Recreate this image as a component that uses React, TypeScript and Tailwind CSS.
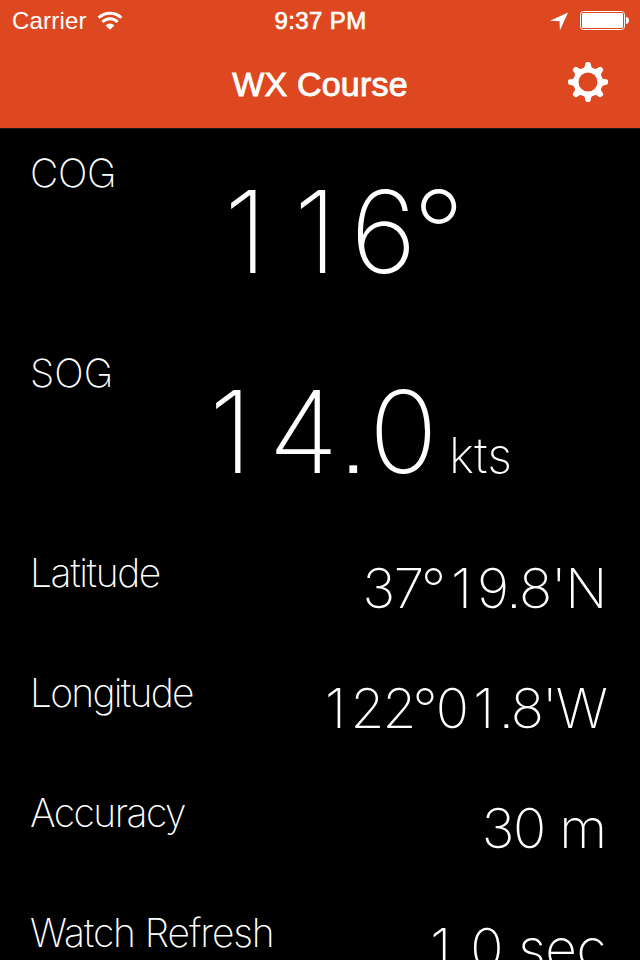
import clsx from "clsx";

type Reading = {
  label: string;
  value: string;
  labelClass?: string;
  valueClass?: string;
};

const readings: Reading[] = [
  {
    label: "Latitude",
    value: "37°19.8'N",
    labelClass: "tracking-[-1.4px]",
    valueClass: "tracking-[-1.3px]",
  },
  {
    label: "Longitude",
    value: "122°01.8'W",
    labelClass: "tracking-[-1.75px]",
    valueClass: "tracking-[-1.9px]",
  },
  {
    label: "Accuracy",
    value: "30 m",
    labelClass: "tracking-[-1.5px]",
    valueClass: "tracking-[-1.2px]",
  },
  {
    label: "Watch Refresh",
    value: "1.0 sec",
    labelClass: "tracking-[-1.1px]",
    valueClass: "tracking-[-0.5px]",
  },
];

const WifiIcon = () => (
  <svg width="26" height="20" viewBox="0 0 26 20" fill="none">
    <path
      d="M1.6 6.8a16.3 16.3 0 0 1 22.8 0M5.4 11a10.8 10.8 0 0 1 15.2 0"
      stroke="white"
      strokeWidth="3"
    />
    <path d="M13 18.8l-4.4-4.4a6.2 6.2 0 0 1 8.8 0z" fill="white" />
  </svg>
);

const LocationIcon = () => (
  <svg width="18" height="19" viewBox="0 0 18 19" fill="white">
    <path d="M0 8.8L18 0.5L9.9 18.5L9.6 9.2z" />
  </svg>
);

const BatteryIcon = () => (
  <svg width="49" height="20" viewBox="0 0 49 20" fill="white">
    <rect
      x="0.5"
      y="0.5"
      width="44"
      height="18"
      rx="3"
      fill="none"
      stroke="white"
    />
    <rect x="2" y="2" width="41" height="15" rx="1.6" />
    <path d="M46 6c2 .2 3 1.5 3 3.5S48 12.800 46 13z" />
  </svg>
);

const GearIcon = () => (
  <svg width="40" height="40" viewBox="-20 -20 40 40">
    <circle r="12.1" fill="none" stroke="white" strokeWidth="5.2" />
    {[0, 45, 90, 135, 180, 225, 270, 315].map((angle) => (
      <path
        key={angle}
        transform={`rotate(${angle})`}
        d="M-5.6 -12.500Q-3 -14.200 -2.700 -18Q-2.500 -20 -1 -20H1Q2.500 -20 2.700 -18Q3 -14.200 5.600 -12.500z"
        fill="white"
      />
    ))}
  </svg>
);

const Label = ({ text, className }: { text: string; className?: string }) => (
  <h2
    className={clsx(
      "pt-[21px] text-[39px] leading-[48px] font-[150] whitespace-nowrap",
      className,
    )}
  >
    {text}
  </h2>
);

// Gives the narrow "1" a full digit's width and pulls the degree sign in
const Digits = ({ text }: { text: string }) => (
  <>
    {text.split(/([1°])/).map((part, index) => (
      <span
        key={index}
        className={clsx(
          part === "1" && "mr-[0.115em] ml-[0.115em]",
          part === "°" && "ml-[-0.035em]",
        )}
      >
        {part}
      </span>
    ))}
  </>
);

const App = () => {
  return (
    <div className="flex h-[960px] w-[640px] flex-col overflow-hidden bg-black font-['Inter','Liberation_Sans',sans-serif] text-white [font-feature-settings:'ss07','cv10']">
      <header className="h-32 shrink-0 bg-[#dd4820] font-['Liberation_Sans',Arial,sans-serif] shadow-[0_1px_0_#1c1c1c]">
        <div className="grid h-[42px] grid-cols-3 items-center pr-[11px] pl-3">
          <div className="flex items-center gap-2.5">
            <span className="text-[24px] leading-10 tracking-[0.2px]">
              Carrier
            </span>
            <WifiIcon />
          </div>
          <span className="text-center text-[24px] leading-10 tracking-[0.4px] [-webkit-text-stroke:0.7px_white]">
            9:37 PM
          </span>
          <div className="flex items-center justify-end gap-3">
            <LocationIcon />
            <BatteryIcon />
          </div>
        </div>
        <div className="grid h-[86px] grid-cols-[1fr_auto_1fr] items-center px-8">
          <h1 className="col-start-2 mb-0.5 text-[34px] tracking-[0.2px] [-webkit-text-stroke:0.9px_white]">
            WX Course
          </h1>
          <button className="mb-1.5 justify-self-end">
            <GearIcon />
          </button>
        </div>
      </header>

      <main className="shrink-0">
        <section className="grid h-[200px] grid-cols-[181px_1fr] pl-[30px]">
          <Label text="COG" className="tracking-[-0.3px]" />
          <p className="text-[114px] leading-[207px] font-extralight">
            <Digits text="116°" />
          </p>
        </section>
        <section className="grid h-[200px] grid-cols-[166px_1fr] pl-[30px]">
          <Label text="SOG" />
          <p className="text-[114px] leading-[207px] font-extralight">
            <span className="tracking-[3px]">
              <Digits text="14.0" />
            </span>
            <span className="ml-2 text-[49px] font-[150] tracking-[0.3px]">
              kts
            </span>
          </p>
        </section>

        {readings.map((reading) => (
          <section
            key={reading.label}
            className="flex h-[120px] justify-between pr-[34px] pl-[30px]"
          >
            <Label text={reading.label} className={reading.labelClass} />
            <p
              className={clsx(
                "text-[55px] leading-[120px] font-[150] whitespace-nowrap",
                reading.valueClass,
              )}
            >
              <Digits text={reading.value} />
            </p>
          </section>
        ))}
      </main>
    </div>
  );
};

export default App;
